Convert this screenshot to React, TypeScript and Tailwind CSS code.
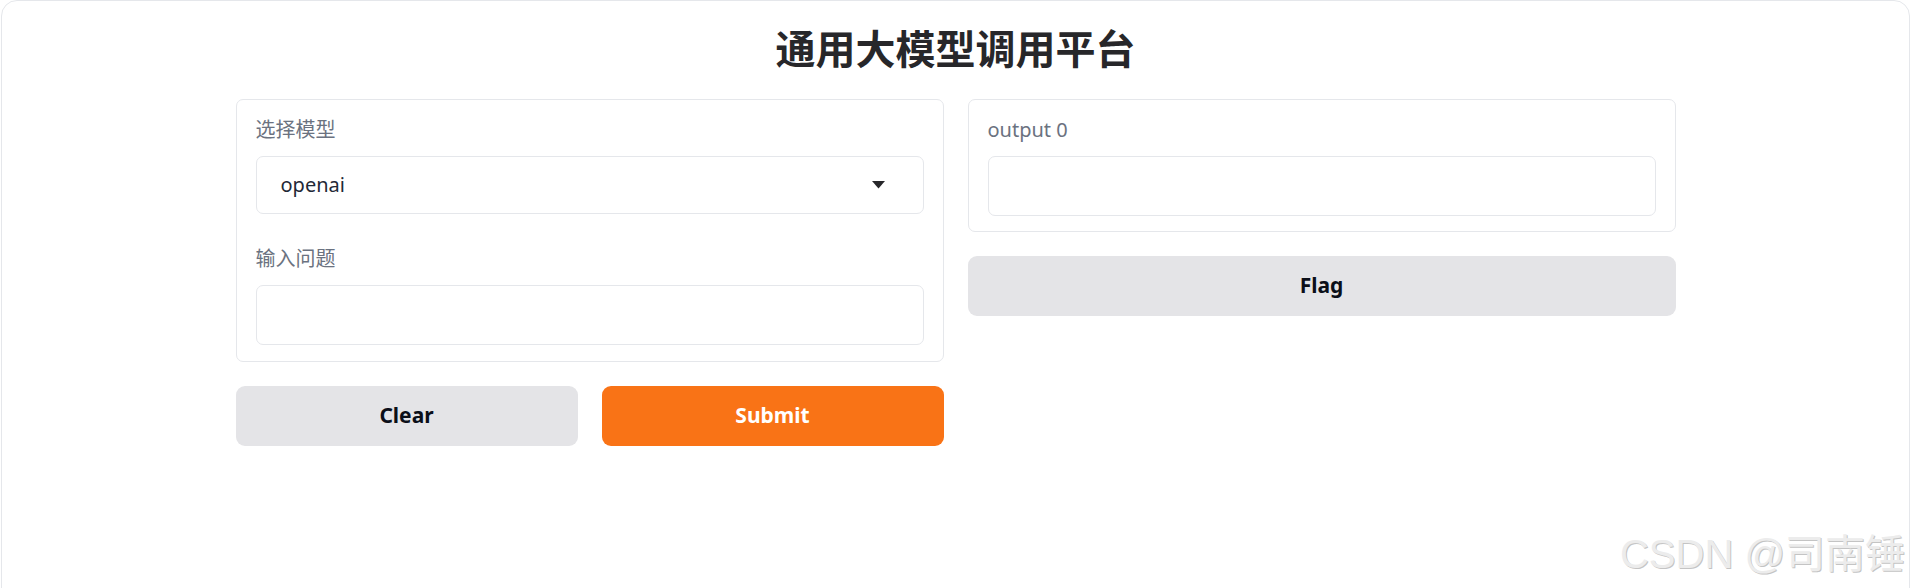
import React, { useState } from 'react';

const FONT = "font-['Noto_Sans','Noto_Sans_CJK_SC',sans-serif]";

const Label = ({ children }: { children: React.ReactNode }) => (
    <span className="block text-[20px] leading-[28px] text-[#6b7280] mb-[12px]">{children}</span>
);

export default function App() {
    const [model] = useState('openai');
    const [question, setQuestion] = useState('');

    return (
        <div className={`h-[588px] w-full overflow-hidden bg-white ${FONT}`}>
            <div className="relative h-[640px] ml-[1px] border border-[#e5e7eb] rounded-t-[16px] bg-white">
                <h1 className="pt-[24px] text-center text-[40px] leading-[48px] font-bold text-[#27272a]">
                    通用大模型调用平台
                </h1>

                <div className="w-[1440px] mx-auto mt-[26px] flex gap-[24px]">
                    {/* inputs */}
                    <div className="w-[708px] flex flex-col gap-[24px]">
                        <div className="border border-[#e5e7eb] rounded-[7px] px-[19px] pt-[16px] pb-[16px]">
                            <Label>选择模型</Label>
                            <div className="h-[58px] border border-[#e5e7eb] rounded-[7px] flex items-center justify-between pl-[24px] pr-[38px]">
                                <span className="text-[20px] text-[#1f2937]">{model}</span>
                                <svg width="13" height="8" viewBox="0 0 13 8">
                                    <polygon points="0,0 13,0 6.5,7.5" fill="#27272a" />
                                </svg>
                            </div>

                            <div className="mt-[31px]">
                                <Label>输入问题</Label>
                                <input
                                    value={question}
                                    onChange={e => setQuestion(e.target.value)}
                                    className="block w-full h-[60px] border border-[#e5e7eb] rounded-[7px] px-[24px] text-[20px] outline-none"
                                />
                            </div>
                        </div>

                        <div className="flex gap-[24px]">
                            <button className="flex-1 h-[60px] rounded-[9px] bg-[#e4e4e7] text-[21px] font-bold text-[#0b0f19]">
                                Clear
                            </button>
                            <button className="flex-1 h-[60px] rounded-[9px] bg-[#f97316] text-[21px] font-bold text-white">
                                Submit
                            </button>
                        </div>
                    </div>

                    {/* outputs */}
                    <div className="w-[708px] flex flex-col gap-[24px]">
                        <div className="border border-[#e5e7eb] rounded-[7px] px-[19px] pt-[16px] pb-[15px]">
                            <Label>output 0</Label>
                            <div className="h-[60px] border border-[#e5e7eb] rounded-[7px]" />
                        </div>
                        <button className="h-[60px] rounded-[9px] bg-[#e4e4e7] text-[21px] font-bold text-[#0b0f19]">
                            Flag
                        </button>
                    </div>
                </div>

                <span className="absolute right-[4px] top-[529px] text-[40px] leading-[48px] font-['Liberation_Sans','Noto_Sans_CJK_SC',sans-serif] text-[#ececec] [text-shadow:1px_1px_0_#c4c4c4]">
                    CSDN @司南锤
                </span>
            </div>
        </div>
    );
}
